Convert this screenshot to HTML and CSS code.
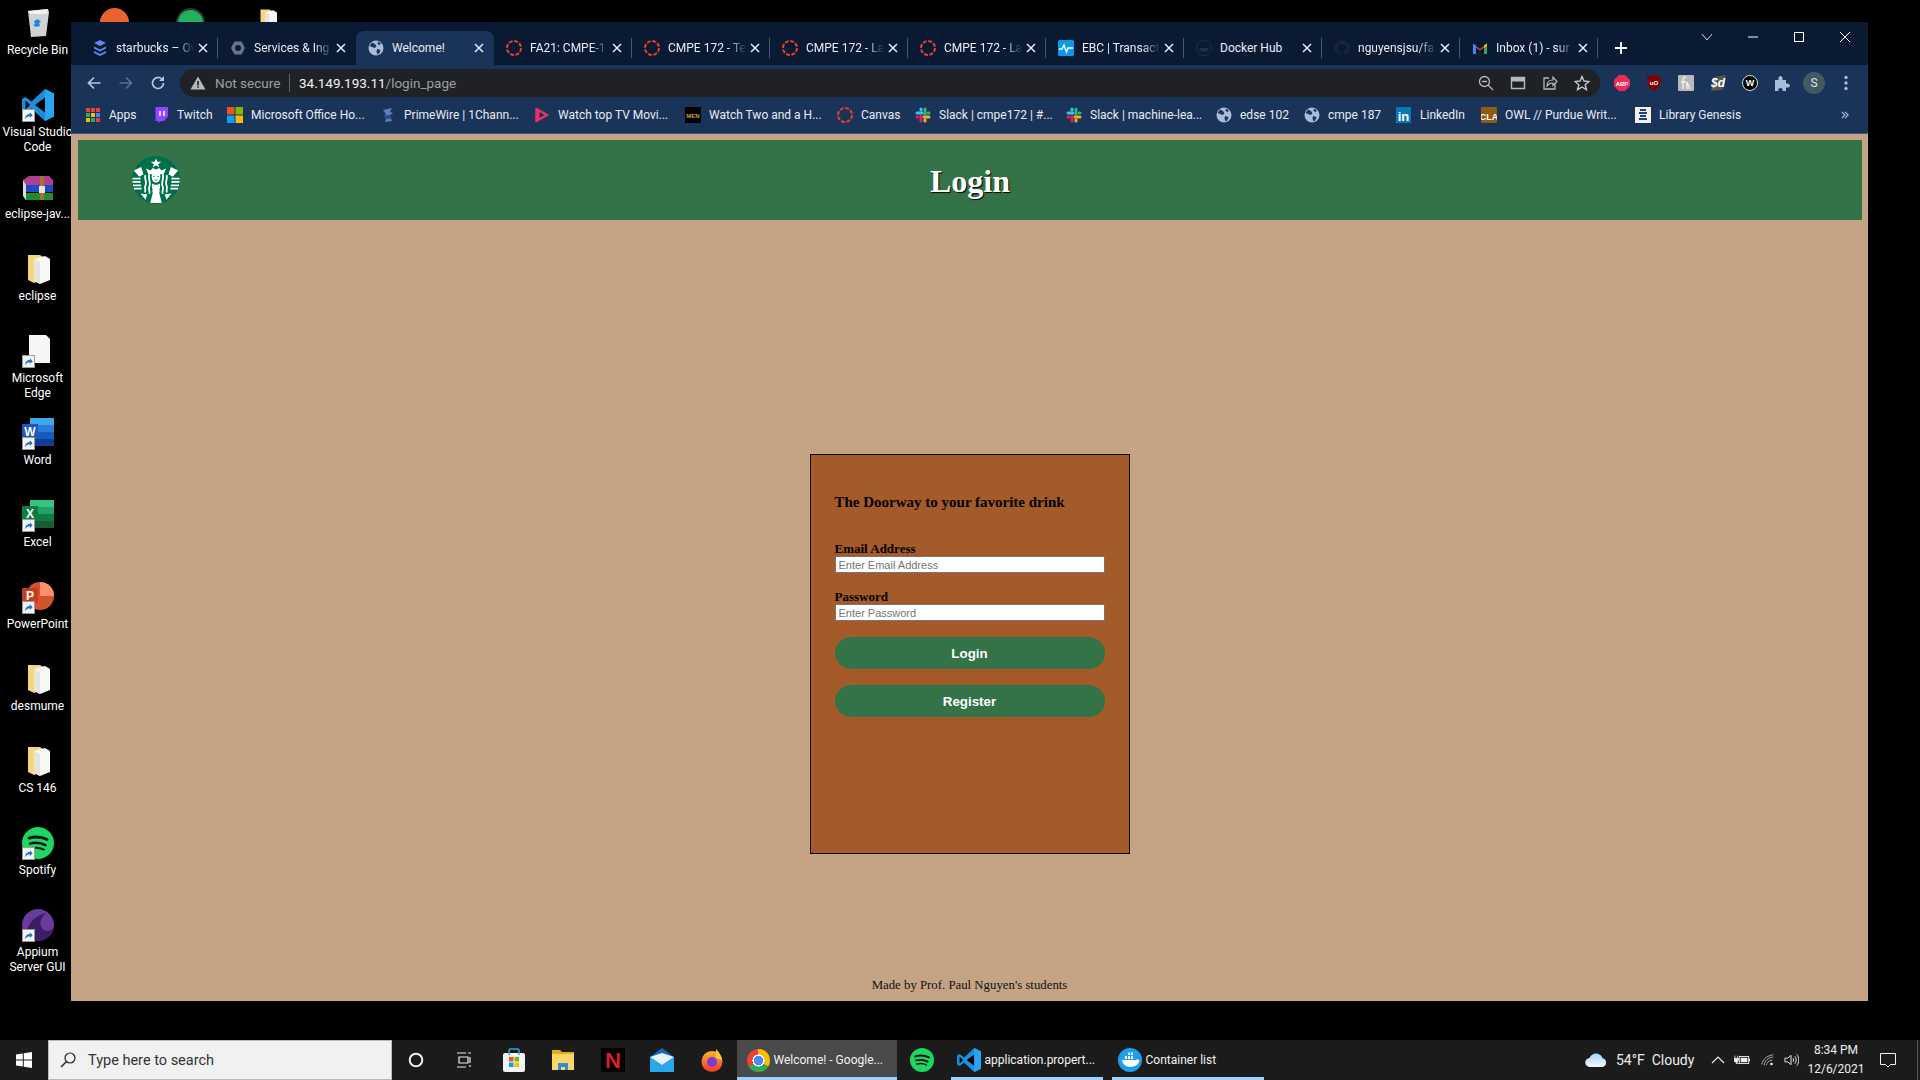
FILE: index.html
```html
<!DOCTYPE html>
<html lang="en">
<head>
<meta charset="utf-8">
<title>Welcome!</title>
<link rel="stylesheet" href="styles.css">
</head>
<body>
<svg class="defs" width="0" height="0" aria-hidden="true">
  <defs>
    <symbol id="canvas" viewBox="0 0 16 16"><circle cx="8" cy="8" r="7" fill="none" stroke="#e8402c" stroke-width="2" stroke-dasharray="3.900 1.600"/></symbol>
    <symbol id="globe" viewBox="0 0 16 16"><circle cx="8" cy="8" r="7.500" fill="#a9bcdc"/><path d="M4 2.500l3 1.500 1.500 2-1.500 2-3-1-2.500-1zM9 9l3.500 1-1 3-2 1.500-1-3zM10 1.500l3 2-1.500 1.500-2-1z" fill="#1a3358"/></symbol>
    <symbol id="slack" viewBox="0 0 16 16"><g stroke-width="3" stroke-linecap="round" fill="none"><path d="M2 6h5" stroke="#36c5f0"/><path d="M6 2v1" stroke="#36c5f0"/><path d="M10 2v5" stroke="#2eb67d"/><path d="M14 6h-1" stroke="#2eb67d"/><path d="M14 10H9" stroke="#ecb22e"/><path d="M10 14v-1" stroke="#ecb22e"/><path d="M6 14V9" stroke="#e01e5a"/><path d="M2 10h1" stroke="#e01e5a"/></g></symbol>
    <symbol id="close" viewBox="0 0 10 10"><path d="M1 1l8 8M9 1l-8 8" stroke="#e8edf5" stroke-width="1.500" fill="none"/></symbol>
    <symbol id="shortcut" viewBox="0 0 14 14"><rect x=".5" y=".5" width="13" height="13" fill="#f4f4f4" stroke="#9a9a9a"/><path d="M3.500 11c0-4 2-5.500 5-5.500V3.500l3 3.200-3 3V7.800c-2 0-3.500.7-5 3.200z" fill="#1f74c9"/></symbol>
    <symbol id="folder" viewBox="0 0 32 32"><path d="M6 2h12l3 2 1 22-10 4-6-3z" fill="#f6d77e"/><path d="M12 6l11-3 5 3v21l-10 4-6-3z" fill="#f7f7f5"/><path d="M12 6l6 3v22l-6-3z" fill="#e4e4e0"/></symbol>
    <symbol id="vscode" viewBox="0 0 32 32"><path d="M23 0l9 4.500v23L23 32 9.500 19.500 3.500 24 0 22V10l3.500-2 6 4.500z" fill="#1a8fe0"/><path d="M23 8.500L13 16l10 7.500z" fill="#000"/><path d="M3.500 11.500v9L8 16z" fill="#000"/><path d="M23 0l9 4.500v23L23 32z" fill="#2aa4ee"/></symbol>
    <symbol id="spotify" viewBox="0 0 30 30"><circle cx="15" cy="15" r="15" fill="#1ed760"/><g fill="none" stroke="#111" stroke-linecap="round"><path d="M6.500 10.500c6-1.800 12-1.300 17 1.300" stroke-width="2.600"/><path d="M7.500 15.500c5-1.300 10-.9 14.500 1.500" stroke-width="2.200"/><path d="M8.500 20c4-1 8.500-.7 12 1.200" stroke-width="1.800"/></g></symbol>
  </defs>
</svg>

<div class="desktop">
  <div class="peek-row">
    <span class="peek peek-orange"></span>
    <span class="peek peek-green"></span>
    <svg class="peek-folder"><use href="#folder"/></svg>
  </div>

  <div class="icons">
    <div class="dicon"><svg class="dimg" viewBox="0 0 32 32"><path d="M6 4l20-2 1 3-3 24-15 1z" fill="#cfd3d6"/><path d="M6 4l20-2-1 5H8z" fill="#f1f1f1"/><path d="M12 14l4-2 3 3-2 1 1 3-4 1-3-2 2-1z" fill="#1c86e0"/></svg><span class="dlabel">Recycle Bin</span></div>
    <div class="dicon"><span class="dbox"><svg class="dimg"><use href="#vscode"/></svg><svg class="arrow"><use href="#shortcut"/></svg></span><span class="dlabel">Visual Studio Code</span></div>
    <div class="dicon"><svg class="dimg" viewBox="0 0 32 32"><path d="M1 9l6-4h20l4 4v5H3z" fill="#b0408f"/><rect x="3" y="14" width="28" height="7" fill="#2148c9"/><rect x="3" y="22" width="28" height="7" fill="#1e8c2f"/><path d="M1 9l3 5v15l-3-4z" fill="#ddd"/><rect x="18" y="5" width="4" height="24" fill="#a8752d"/><rect x="17" y="15" width="6" height="7" fill="#e8e4d8"/></svg><span class="dlabel">eclipse-jav...</span></div>
    <div class="dicon"><svg class="dimg"><use href="#folder"/></svg><span class="dlabel">eclipse</span></div>
    <div class="dicon"><span class="dbox"><svg class="dimg" viewBox="0 0 32 32"><path d="M7 0h17l4 4v24H7z" fill="#f6f6f6"/></svg><svg class="arrow"><use href="#shortcut"/></svg></span><span class="dlabel">Microsoft<br>Edge</span></div>
    <div class="dicon"><span class="dbox"><svg class="dimg" viewBox="0 0 32 32"><rect x="8" y="1" width="24" height="7" fill="#41a5ee"/><rect x="8" y="8" width="24" height="7" fill="#2b7cd3"/><rect x="8" y="15" width="24" height="7" fill="#185abd"/><rect x="8" y="22" width="24" height="7" fill="#103f91"/><rect y="7" width="16" height="15" fill="#1a5bb8"/><text x="8" y="19" class="svg-letter">W</text></svg><svg class="arrow"><use href="#shortcut"/></svg></span><span class="dlabel">Word</span></div>
    <div class="dicon"><span class="dbox"><svg class="dimg" viewBox="0 0 32 32"><rect x="8" y="1" width="24" height="7" fill="#33c481"/><rect x="8" y="8" width="24" height="7" fill="#21a366"/><rect x="8" y="15" width="24" height="7" fill="#107c41"/><rect x="8" y="22" width="24" height="7" fill="#185c37"/><rect y="7" width="16" height="15" fill="#107c41"/><text x="8" y="19" class="svg-letter">X</text></svg><svg class="arrow"><use href="#shortcut"/></svg></span><span class="dlabel">Excel</span></div>
    <div class="dicon"><span class="dbox"><svg class="dimg" viewBox="0 0 32 32"><circle cx="18" cy="15" r="14" fill="#d35230"/><path d="M18 1a14 14 0 0 1 14 14H18z" fill="#ff8f6b"/><rect y="7" width="16" height="15" fill="#c43e1c"/><text x="8" y="19" class="svg-letter">P</text></svg><svg class="arrow"><use href="#shortcut"/></svg></span><span class="dlabel">PowerPoint</span></div>
    <div class="dicon"><svg class="dimg"><use href="#folder"/></svg><span class="dlabel">desmume</span></div>
    <div class="dicon"><svg class="dimg"><use href="#folder"/></svg><span class="dlabel">CS 146</span></div>
    <div class="dicon"><span class="dbox"><svg class="dimg"><use href="#spotify"/></svg><svg class="arrow"><use href="#shortcut"/></svg></span><span class="dlabel">Spotify</span></div>
    <div class="dicon"><span class="dbox"><svg class="dimg" viewBox="0 0 32 32"><circle cx="16" cy="16" r="16" fill="#6a3a9c"/><path d="M4 24C8 10 16 6 24 4c-6 6-8 12-2 17 3 2 7 1 10-3-1 8-8 14-16 14-5 0-9-3-12-8z" fill="#3d1c66"/></svg><svg class="arrow"><use href="#shortcut"/></svg></span><span class="dlabel">Appium<br>Server GUI</span></div>
  </div>

  <div class="window">
    <div class="tabstrip">
      <div class="tab"><svg class="fav" viewBox="0 0 16 16"><path d="M8 0l6 3-6 3-6-3zM2 6.500l6 3 6-3v2l-6 3-6-3zM2 11l6 3 6-3v2l-6 3-6-3z" fill="#5f8bee"/></svg><span class="title">starbucks – Ov</span><svg class="x"><use href="#close"/></svg></div>
      <div class="tab"><svg class="fav" viewBox="0 0 16 16"><path d="M4.500 1.500h7L15 8l-3.500 6.500h-7L1 8z" fill="#6a7485"/><circle cx="8" cy="8" r="3" fill="#0b1a33"/></svg><span class="title">Services &amp; Ing</span><svg class="x"><use href="#close"/></svg></div>
      <div class="tab active"><svg class="fav"><use href="#globe"/></svg><span class="title plain">Welcome!</span><svg class="x"><use href="#close"/></svg></div>
      <div class="tab"><svg class="fav"><use href="#canvas"/></svg><span class="title">FA21: CMPE-1</span><svg class="x"><use href="#close"/></svg></div>
      <div class="tab"><svg class="fav"><use href="#canvas"/></svg><span class="title">CMPE 172 - Te</span><svg class="x"><use href="#close"/></svg></div>
      <div class="tab"><svg class="fav"><use href="#canvas"/></svg><span class="title">CMPE 172 - La</span><svg class="x"><use href="#close"/></svg></div>
      <div class="tab"><svg class="fav"><use href="#canvas"/></svg><span class="title">CMPE 172 - La</span><svg class="x"><use href="#close"/></svg></div>
      <div class="tab"><svg class="fav" viewBox="0 0 16 16"><rect width="16" height="16" rx="1.500" fill="#0a9ae8"/><path d="M1 9h3l2-4 2.500 7L10 8h5" fill="none" stroke="#fff" stroke-width="1.400"/></svg><span class="title">EBC | Transact</span><svg class="x"><use href="#close"/></svg></div>
      <div class="tab"><svg class="fav" viewBox="0 0 16 16"><circle cx="8" cy="8" r="7.500" fill="none" stroke="#1d3248"/><path d="M3 8h8c1 0 2-1 2-1s-.5 5-5 5c-3 0-5-2-5-4z" fill="#1d3248"/></svg><span class="title plain">Docker Hub</span><svg class="x"><use href="#close"/></svg></div>
      <div class="tab"><svg class="fav" viewBox="0 0 16 16"><path d="M8 .5a7.500 7.500 0 0 0-2.400 14.600c.4 0 .5-.2.5-.4v-1.300c-2.100.4-2.600-1-2.600-1-.4-.9-.9-1.100-.9-1.100-.7-.5 0-.5 0-.5.8.1 1.200.8 1.200.8.7 1.200 1.800.9 2.300.7 0-.5.300-.9.500-1.100-1.700-.2-3.400-.8-3.400-3.700 0-.8.300-1.500.8-2-.1-.2-.3-1 .1-2 0 0 .6-.2 2 .8a7 7 0 0 1 3.800 0c1.400-1 2-.8 2-.8.400 1 .2 1.800.1 2 .5.500.8 1.200.8 2 0 2.900-1.700 3.500-3.400 3.700.3.200.500.700.500 1.400v2.100c0 .2.100.4.500.4A7.500 7.500 0 0 0 8 .5z" fill="#1d2633"/></svg><span class="title">nguyensjsu/fa</span><svg class="x"><use href="#close"/></svg></div>
      <div class="tab"><svg class="fav" viewBox="0 0 16 16"><path d="M1 14V4l7 5 7-5v10h-3V7.500L8 10.500 4 7.500V14z" fill="#ea4335"/><path d="M1 14V3.500l3 2V14z" fill="#4285f4"/><path d="M15 14V3.500l-3 2V14z" fill="#34a853"/><path d="M12 5.500l3-2V6l-3 2z" fill="#fbbc04"/></svg><span class="title">Inbox (1) - sur</span><svg class="x"><use href="#close"/></svg></div>
      <div class="newtab"><svg class="plus" viewBox="0 0 14 14"><path d="M7 1v12M1 7h12" stroke="#fff" stroke-width="1.800"/></svg></div>
      <div class="winctl">
        <span class="wbtn"><svg viewBox="0 0 12 12"><path d="M1 3l5 6 5-6" fill="none" stroke="#cfd6e2"/></svg></span>
        <span class="wbtn"><svg viewBox="0 0 12 12"><path d="M1 6h10" stroke="#fff"/></svg></span>
        <span class="wbtn"><svg viewBox="0 0 12 12"><rect x="1.500" y="1.500" width="9" height="9" fill="none" stroke="#fff"/></svg></span>
        <span class="wbtn"><svg viewBox="0 0 12 12"><path d="M1 1l10 10M11 1L1 11" stroke="#fff"/></svg></span>
      </div>
    </div>

    <div class="toolbar">
      <span class="tbtn"><svg viewBox="0 0 16 16"><path d="M14.500 8H2.500M8 2.500L2.500 8 8 13.500" fill="none" stroke="#b9c6dc" stroke-width="1.700"/></svg></span>
      <span class="tbtn"><svg viewBox="0 0 16 16"><path d="M1.500 8h12M8 2.500L13.500 8 8 13.500" fill="none" stroke="#5a6f92" stroke-width="1.700"/></svg></span>
      <span class="tbtn"><svg viewBox="0 0 16 16"><path d="M13.500 8A5.500 5.500 0 1 1 11.800 4" fill="none" stroke="#b9c6dc" stroke-width="1.700"/><path d="M14 1v5H9z" fill="#b9c6dc"/></svg></span>
      <div class="omnibox">
        <svg class="warn" viewBox="0 0 16 16"><path d="M8 1.500L15.500 14.500H.5z" fill="#b5b9be"/><path d="M7.200 6h1.600v4.500H7.200zM7.200 11.300h1.600v1.500H7.200z" fill="#202124"/></svg>
        <span class="secure">Not secure</span>
        <span class="osep"></span>
        <span class="url"><span class="host">34.149.193.11</span>/login_page</span>
        <div class="oicons">
          <span class="tbtn"><svg viewBox="0 0 16 16"><circle cx="6.500" cy="6.500" r="5" fill="none" stroke="#b5b9be" stroke-width="1.300"/><path d="M4 6.500h5M10 10l5 5" stroke="#b5b9be" stroke-width="1.300"/></svg></span>
          <span class="tbtn"><svg viewBox="0 0 16 16"><path d="M1.500 2.500h13v11h-13z" fill="none" stroke="#b5b9be" stroke-width="1.400"/><rect x="1.500" y="2.500" width="13" height="4" fill="#b5b9be"/></svg></span>
          <span class="tbtn"><svg viewBox="0 0 16 16"><path d="M7 3H2v11h11V9" fill="none" stroke="#b5b9be" stroke-width="1.300"/><path d="M5 11c0-4 2.500-6 6-6V2l4 4.500-4 4V8c-3 0-4.500 1-6 3z" fill="none" stroke="#b5b9be" stroke-width="1.200"/></svg></span>
          <span class="tbtn"><svg viewBox="0 0 16 16"><path d="M8 1.500l2 4.500 5 .5-3.800 3.200 1.200 5L8 12l-4.400 2.700 1.200-5L1 6.500 6 6z" fill="none" stroke="#c4c8cd" stroke-width="1.400"/></svg></span>
        </div>
      </div>
      <div class="exts">
        <span class="tbtn"><svg viewBox="0 0 16 16"><path d="M5 0h6l5 5v6l-5 5H5l-5-5V5z" fill="#ee2a56"/><text x="8" y="10.500" class="svg-abp">ABP</text></svg></span>
        <span class="tbtn"><svg viewBox="0 0 16 16"><path d="M8 0l7 2c0 7-1 11-7 14C2 13 1 9 1 2z" fill="#800000"/><text x="8" y="10" class="svg-abp">uO</text></svg></span>
        <span class="tbtn"><svg viewBox="0 0 16 16"><rect width="16" height="16" rx="1" fill="#b9b9b9"/><path d="M5 14V5c0-2 1-3 3-3M3 7h5M9 14V7l3 7" fill="none" stroke="#f2f2f2" stroke-width="1.300"/></svg></span>
        <span class="tbtn"><svg viewBox="0 0 16 16"><path d="M4 2l12-2-3 15-12 1z" fill="#555"/><text x="8" y="12" class="svg-sd">$d</text></svg></span>
        <span class="tbtn"><svg viewBox="0 0 16 16"><circle cx="8" cy="8" r="7.500" fill="#000" stroke="#ddd"/><text x="8" y="11.200" class="svg-w">W</text></svg></span>
        <span class="tbtn"><svg viewBox="0 0 16 16"><path d="M1 5h3.500C4 2 5.500 1 6.500 1S9 2 8.500 5H12v3.500c3-.5 4 1 4 2s-1 2.500-4 2V16H8.500c.5-2-.5-3-2-3s-2.500 1-2 3H1z" fill="#a9bcdc"/></svg></span>
        <span class="tbtn"><span class="avatar">S</span></span>
        <span class="tbtn"><svg viewBox="0 0 16 16"><g fill="#a9bcdc"><circle cx="8" cy="2.500" r="1.700"/><circle cx="8" cy="8" r="1.700"/><circle cx="8" cy="13.500" r="1.700"/></g></svg></span>
      </div>
    </div>

    <div class="bookmarks">
      <div class="bm"><svg class="fav" viewBox="0 0 16 16"><g><rect x="1" y="1" width="4" height="4" fill="#ea4335"/><rect x="6" y="1" width="4" height="4" fill="#ea4335"/><rect x="11" y="1" width="4" height="4" fill="#ea4335"/><rect x="1" y="6" width="4" height="4" fill="#34a853"/><rect x="6" y="6" width="4" height="4" fill="#fbbc04"/><rect x="11" y="6" width="4" height="4" fill="#4285f4"/><rect x="1" y="11" width="4" height="4" fill="#fbbc04"/><rect x="6" y="11" width="4" height="4" fill="#34a853"/><rect x="11" y="11" width="4" height="4" fill="#ea4335"/></g></svg><span>Apps</span></div>
      <div class="bm"><svg class="fav" viewBox="0 0 16 16"><path d="M2.500 0H15v9.500L11 14H8l-2.500 2v-2H2.500z" fill="#9146ff"/><path d="M7 4v5M11 4v5" stroke="#fff" stroke-width="1.500"/></svg><span>Twitch</span></div>
      <div class="bm"><svg class="fav" viewBox="0 0 16 16"><rect width="7.500" height="7.500" fill="#f25022"/><rect x="8.500" width="7.500" height="7.500" fill="#7fba00"/><rect y="8.500" width="7.500" height="7.500" fill="#00a4ef"/><rect x="8.500" y="8.500" width="7.500" height="7.500" fill="#ffb900"/></svg><span>Microsoft Office Ho...</span></div>
      <div class="bm"><svg class="fav" viewBox="0 0 16 16"><path d="M3 3l9-2-2 4 3 1-3 2 2 6-7 1 2-5-3-1 2-2z" fill="#5f7fbf"/><path d="M5 8h6v4H5z" fill="#2a4f8f"/></svg><span>PrimeWire | 1Chann...</span></div>
      <div class="bm"><svg class="fav" viewBox="0 0 16 16"><path d="M2 1.500L14 8 2 14.500z" fill="#e8326c" stroke="#e8326c" stroke-width="1.500" stroke-linejoin="round"/><path d="M5.500 5l5 3-5 3z" fill="#1a3358"/></svg><span>Watch top TV Movi...</span></div>
      <div class="bm"><svg class="fav" viewBox="0 0 16 16"><rect width="16" height="16" fill="#000"/><text x="8" y="10.500" class="svg-men">MEN</text></svg><span>Watch Two and a H...</span></div>
      <div class="bm"><svg class="fav"><use href="#canvas"/></svg><span>Canvas</span></div>
      <div class="bm"><svg class="fav"><use href="#slack"/></svg><span>Slack | cmpe172 | #...</span></div>
      <div class="bm"><svg class="fav"><use href="#slack"/></svg><span>Slack | machine-lea...</span></div>
      <div class="bm"><svg class="fav"><use href="#globe"/></svg><span>edse 102</span></div>
      <div class="bm"><svg class="fav"><use href="#globe"/></svg><span>cmpe 187</span></div>
      <div class="bm"><svg class="fav" viewBox="0 0 16 16"><rect width="15" height="16" fill="#0a78b5"/><text x="7.500" y="13.500" class="svg-in">in</text></svg><span>LinkedIn</span></div>
      <div class="bm"><svg class="fav" viewBox="0 0 16 16"><rect width="16" height="16" rx="1" fill="#8a5d14"/><text x="8" y="13" class="svg-cla">CLA</text></svg><span>OWL // Purdue Writ...</span></div>
      <div class="bm"><svg class="fav" viewBox="0 0 16 16"><rect width="16" height="16" fill="#f3f1e4"/><path d="M5 3h6M4 6h8M5 9h6M4 12h8" stroke="#1c3f86" stroke-width="1.800"/></svg><span>Library Genesis</span></div>
      <div class="bm-more"><svg class="more" viewBox="0 0 10 10"><path d="M1 1l4 4-4 4M5 1l4 4-4 4" fill="none" stroke="#a9bcdc" stroke-width="1.500"/></svg></div>
    </div>

    <div class="page">
      <header class="site-head">
        <div class="logo-cell">
          <svg class="logo" viewBox="0 0 100 100">
            <circle cx="50" cy="50" r="50" fill="#00704a"/>
            <path d="M50 5l3 7h8l-6.500 5 2.500 7-7-4.500-7 4.500 2.500-7L39 12h8z" fill="#fff"/>
            <path d="M29 26l10 4 4-5 7 3 7-3 4 5 10-4-5 12H34z" fill="#fff"/>
            <path d="M4 30l15-7 5 15-9 5zM96 30l-15-7-5 15 9 5z" fill="#fff"/>
            <path d="M1 47h17M1 54h17M2 61h17M4 68h16M82 47h17M82 54h17M81 61h17M80 68h16" stroke="#fff" stroke-width="3.600"/>
            <path d="M28 40c-4 9 5 13 0 22-3 5 2 9-1 14M36 38c-4 11 5 15 0 26-3 6 3 9 0 15M44 58c-3 7 3 10 0 18M56 58c3 7-3 10 0 18M64 38c4 11-5 15 0 26 3 6-3 9 0 15M72 40c4 9-5 13 0 22 3 5-2 9 1 14" fill="none" stroke="#fff" stroke-width="3.800"/>
            <path d="M41 42c0-5 4-8 9-8s9 3 9 8c0 8-3 13-9 13s-9-5-9-13z" fill="#fff"/>
            <path d="M44 43l4-1M52 42l4 1M47 50h6" stroke="#00704a" stroke-width="1.500"/>
            <path d="M46 60h8l2 14 6 24H38l6-24z" fill="#fff"/>
            <path d="M18 78l14 2-4 11zM82 78l-14 2 4 11z" fill="#fff"/>
          </svg>
        </div>
        <h1 class="site-title">Login</h1>
        <div class="head-spacer"></div>
      </header>

      <main class="page-main">
        <form class="card">
          <h2 class="card-title">The Doorway to your favorite drink</h2>
          <label class="field-label" for="email">Email Address</label>
          <input class="field" id="email" type="text" placeholder="Enter Email Address">
          <label class="field-label second" for="password">Password</label>
          <input class="field" id="password" type="password" placeholder="Enter Password">
          <button class="pill-btn" type="button">Login</button>
          <button class="pill-btn" type="button">Register</button>
        </form>
      </main>

      <footer class="site-foot">Made by Prof. Paul Nguyen's students</footer>
    </div>
  </div>
</div>

<div class="taskbar">
  <div class="start"><svg viewBox="0 0 16 16"><path d="M0 2.500L6.800 1.500V7.500H0zM7.800 1.300L16 0V7.500H7.800zM0 8.500H6.800V14.500L0 13.500zM7.800 8.500H16V16L7.800 14.700z" fill="#fff"/></svg></div>
  <div class="search"><svg viewBox="0 0 16 16"><circle cx="10" cy="6" r="5" fill="none" stroke="#222" stroke-width="1.200"/><path d="M6.500 9.500L1 15" stroke="#222" stroke-width="1.400"/></svg><span>Type here to search</span></div>
  <div class="tslot wide"><svg viewBox="0 0 16 16"><circle cx="8" cy="8" r="6.300" fill="none" stroke="#f0f0f0" stroke-width="2"/></svg></div>
  <div class="tslot wide"><svg viewBox="0 0 16 16"><path d="M1 1h9M12 1h3M3 5h9v6H3zM14 5v6M14 13v2M1 15h9" fill="none" stroke="#eee" stroke-width="1.200"/></svg></div>
  <div class="tslot first-app"><svg class="tico" viewBox="0 0 24 24"><rect x="1" y="5" width="22" height="19" rx="2" fill="#f3f3f3"/><path d="M7 7V2.500c0-1 1-1.500 2-1.500h6c1 0 2 .5 2 1.500V7" fill="none" stroke="#29a8e8" stroke-width="1.500"/><rect x="7" y="9" width="4.500" height="4.500" fill="#f25022"/><rect x="12.500" y="9" width="4.500" height="4.500" fill="#7fba00"/><rect x="7" y="14.500" width="4.500" height="4.500" fill="#00a4ef"/><rect x="12.500" y="14.500" width="4.500" height="4.500" fill="#ffb900"/></svg></div>
  <div class="tslot"><svg class="tico" viewBox="0 0 24 24"><path d="M1 2h8l2 2h12v18H1z" fill="#e8a920"/><rect x="1" y="6" width="22" height="16" fill="#fbd766"/><path d="M7 22v-6a1 1 0 0 1 1-1h8a1 1 0 0 1 1 1v6h-3v-3h-4v3z" fill="#2c8fd6"/></svg></div>
  <div class="tslot"><svg class="tico" viewBox="0 0 24 24"><rect width="24" height="24" fill="#000"/><text x="12" y="20" class="svg-netflix">N</text></svg></div>
  <div class="tslot"><svg class="tico" viewBox="0 0 24 24"><path d="M0 9L12 0l12 9v15H0z" fill="#0f6cbd"/><path d="M0 9v15h24V9l-12 8z" fill="#28a8ea"/><path d="M0 9l12 8 12-8-12-4z" fill="#e6f3fb"/></svg></div>
  <div class="tslot"><svg class="tico" viewBox="0 0 24 24"><defs><linearGradient id="ffx" x1="0" y1="0" x2="0" y2="1"><stop offset="0" stop-color="#ffb52e"/><stop offset="1" stop-color="#f0382b"/></linearGradient></defs><circle cx="12" cy="13.500" r="10.500" fill="url(#ffx)"/><path d="M16 1c3 3 6 8 6 11l-6-2z" fill="#ffcc33"/><circle cx="12" cy="14" r="5" fill="#7a3bd0"/></svg></div>
  <div class="tapp active chrome-app"><span class="chrome-icon"></span><span class="tapp-text">Welcome! - Google...</span></div>
  <div class="tslot spot"><svg class="tico"><use href="#spotify"/></svg></div>
  <div class="tapp running vs-app"><svg class="tico"><use href="#vscode"/></svg><span class="tapp-text">application.propert...</span></div>
  <div class="tapp running docker-app"><svg class="tico" viewBox="0 0 24 24"><circle cx="12" cy="12" r="12" fill="#1d9fee"/><path d="M4 12h13c1 0 2-.5 2.500-1 .5 1 1 1 2 1-1 5-5 7-9 7-5 0-8-3-8.500-7z" fill="#fff"/><path d="M7 8h2v3H7zM10 8h2v3h-2zM13 8h2v3h-2zM10 4.500h2V7h-2zM13 4.500h2V7h-2z" fill="#fff"/></svg><span class="tapp-text">Container list</span></div>

  <div class="tray">
    <svg class="cloud" viewBox="0 0 22 14"><defs><linearGradient id="cl" x1="0" y1="0" x2="0" y2="1"><stop offset="0" stop-color="#a5d4f5"/><stop offset="1" stop-color="#f3f9fe"/></linearGradient></defs><path d="M5 14a4.500 4.500 0 0 1-.5-9C6 1.500 9 0 12 .5c3 .5 5 2.500 5.500 4.700A4.500 4.500 0 0 1 17.500 14z" fill="url(#cl)"/></svg>
    <span class="weather">54°F&nbsp; Cloudy</span>
    <svg class="ti chev" viewBox="0 0 14 14"><path d="M1 10l6-6 6 6" fill="none" stroke="#eee" stroke-width="1.200"/></svg>
    <svg class="ti batt" viewBox="0 0 18 14"><path d="M1 2v3M4 2v3M0 5h5v2a2 2 0 0 1-5 0zM2.500 9v2h3" fill="#eee" stroke="#eee" stroke-width=".8"/><rect x="6" y="3" width="10.500" height="8" fill="none" stroke="#eee"/><rect x="7.500" y="4.500" width="7.500" height="5" fill="#eee"/><rect x="16.500" y="5.500" width="1.500" height="3" fill="#eee"/></svg>
    <svg class="ti wifi" viewBox="0 0 16 14"><path d="M1 12C2 6 7 2 14 1M3.500 13C4 8 8 4.500 14 3.500M6 13c.5-3 3-5.500 7-6" fill="none" stroke="#bbb"/><circle cx="12" cy="11.500" r="1.500" fill="#eee"/></svg>
    <svg class="ti vol" viewBox="0 0 16 14"><path d="M1 5h3l3.500-3v10L4 9H1z" fill="none" stroke="#eee"/><path d="M9.500 5c1 1 1 3 0 4M11.500 3c2 2 2 6 0 8M13.500 1c3 3 3 9 0 12" fill="none" stroke="#eee"/></svg>
    <div class="clock"><span>8:34 PM</span><span>12/6/2021</span></div>
    <svg class="notif" viewBox="0 0 16 16"><path d="M.5 1.500h15v11h-5L8 15l-2.500-2.500h-5z" fill="none" stroke="#eee"/></svg>
    <span class="show-desk"></span>
  </div>
</div>
</body>
</html>
```

FILE: styles.css
```css
* { box-sizing: border-box; }
html, body { margin: 0; padding: 0; height: 100%; }
body {
  width: 1920px;
  height: 1080px;
  overflow: hidden;
  background: #000;
  display: flex;
  flex-direction: column;
  font-family: Roboto, "Noto Sans", sans-serif;
}
.defs { position: absolute; }

/* desktop */
.desktop { position: relative; height: 1040px; flex: none; }
.peek-row { position: absolute; left: 100px; top: 8px; display: flex; gap: 47px; }
.peek { width: 29px; height: 29px; border-radius: 50%; display: block; }
.peek-orange { background: #e9622f; }
.peek-green { background: #1fb45c; border: 2px solid #333; }
.peek-folder { width: 24px; height: 24px; margin-left: 4px; }

.icons { width: 75px; padding-top: 7px; display: flex; flex-direction: column; }
.dicon { height: 82px; display: flex; flex-direction: column; align-items: center; }
.dbox { position: relative; width: 32px; height: 32px; display: block; }
.dimg { width: 32px; height: 32px; display: block; flex: none; }
.arrow { position: absolute; left: 0; bottom: -1px; width: 13px; height: 13px; }
.dlabel {
  margin-top: 4px;
  color: #fff;
  font-size: 12px;
  line-height: 15px;
  text-align: center;
}
.svg-letter { font: bold 12px "Liberation Sans", sans-serif; fill: #fff; text-anchor: middle; }
.svg-abp { font: bold 6px "Liberation Sans", sans-serif; fill: #fff; text-anchor: middle; }
.svg-sd { font: italic bold 12px "Liberation Sans", sans-serif; fill: #fff; text-anchor: middle; }
.svg-w { font: bold 9px "Liberation Sans", sans-serif; fill: #fff; text-anchor: middle; }
.svg-men { font: bold 6px "Liberation Sans", sans-serif; fill: #c7a02a; text-anchor: middle; }
.svg-in { font: bold 13px "Liberation Sans", sans-serif; fill: #fff; text-anchor: middle; }
.svg-cla { font: bold 9px "Liberation Sans", sans-serif; fill: #fff; text-anchor: middle; }
.svg-netflix { font: bold 22px "Liberation Sans", sans-serif; fill: #d81f26; text-anchor: middle; }

/* browser window */
.window {
  position: absolute;
  left: 71px;
  top: 22px;
  width: 1797px;
  height: 979px;
  display: flex;
  flex-direction: column;
}
.tabstrip { height: 43px; flex: none; background: #0b1a33; display: flex; padding: 9px 0 0 9px; }
.tab {
  position: relative;
  width: 138px;
  height: 34px;
  flex: none;
  display: flex;
  align-items: center;
  padding-left: 12px;
  color: #e8edf5;
  font-size: 12px;
}
.tab::after {
  content: "";
  position: absolute;
  right: 0;
  top: 7px;
  width: 1px;
  height: 20px;
  background: #46566f;
}
.tab:nth-child(2)::after, .tab.active::after { background: transparent; }
.tab.active { background: #1a3358; border-radius: 8px 8px 0 0; }
.fav { width: 16px; height: 16px; flex: none; display: block; }
.title {
  margin-left: 8px;
  width: 78px;
  flex: none;
  white-space: nowrap;
  -webkit-mask-image: linear-gradient(90deg, #000 78%, transparent 100%);
  mask-image: linear-gradient(90deg, #000 78%, transparent 100%);
}
.title.plain { -webkit-mask-image: none; mask-image: none; }
.x { width: 10px; height: 10px; margin-left: 4px; flex: none; }
.newtab { width: 46px; height: 34px; flex: none; display: flex; align-items: center; justify-content: center; }
.plus { width: 14px; height: 14px; }
.winctl { margin-left: auto; margin-top: -9px; height: 30px; display: flex; }
.wbtn { width: 46px; height: 30px; display: flex; align-items: center; justify-content: center; }
.wbtn svg { width: 12px; height: 12px; }

.toolbar { height: 32px; flex: none; background: #1a3358; display: flex; padding-left: 7px; }
.tbtn { width: 32px; height: 28px; margin-top: 4px; display: flex; align-items: center; justify-content: center; flex: none; }
.tbtn svg { width: 16px; height: 16px; }
.omnibox {
  margin: 4px 0 0 6px;
  width: 1420px;
  height: 28px;
  flex: none;
  border-radius: 14px;
  background: #202124;
  display: flex;
  align-items: center;
  padding-left: 10px;
  color: #9aa0a6;
  font-size: 13.5px;
}
.warn { width: 16px; height: 16px; flex: none; }
.secure { margin-left: 9px; width: 66px; white-space: nowrap; }
.osep { width: 1px; height: 18px; background: #5f6368; margin: 0 9px 0 8px; }
.host { color: #f1f3f4; }
.oicons { margin-left: auto; padding-right: 2px; display: flex; }
.oicons .tbtn { margin-top: 0; }
.exts { margin-left: 6px; display: flex; }
.avatar {
  width: 22px; height: 22px; border-radius: 50%;
  background: #435a63; color: #dfe6ea;
  font-size: 12px; display: flex; align-items: center; justify-content: center;
}

.bookmarks {
  height: 37px;
  flex: none;
  background: #1a3358;
  border-bottom: 1px solid #44546c;
  padding-left: 14px;
  display: grid;
  grid-template-columns: 68px 74px 153px 154px 151px 152px 78px 151px 150px 88px 92px 85px 154px 1fr 46px;
  align-items: center;
  color: #e8edf5;
  font-size: 12px;
}
.bm { display: flex; align-items: center; gap: 8px; white-space: nowrap; height: 20px; }
.bm-more { display: flex; justify-content: center; grid-column: 15; }
.more { width: 8px; height: 8px; }

/* page */
.page { flex: 1; min-height: 0; background: #c4a484; display: flex; flex-direction: column; font-family: "Liberation Serif", serif; }
.site-head {
  height: 80px;
  flex: none;
  margin: 6px 6px 0 7px;
  background: #337347;
  display: grid;
  grid-template-columns: 1fr auto 1fr;
  align-items: center;
}
.logo-cell { padding-left: 54px; display: flex; }
.logo { width: 48px; height: 48px; display: block; }
.site-title { margin: 2px 0 0; color: #fff; font-size: 32px; font-weight: bold; text-shadow: 1px 1px 1px #000; line-height: 40px; }
.page-main { display: flex; justify-content: center; padding-top: 234px; }
.card {
  width: 320px;
  height: 400px;
  background: #a55a2a;
  border: 1px solid #000;
  padding: 38px 24px 0;
  display: flex;
  flex-direction: column;
}
.card-title { margin: 0 0 31px; font-size: 15px; line-height: 18px; font-weight: bold; color: #000; }
.field-label { font-size: 13px; line-height: 14px; font-weight: bold; color: #000; }
.field-label.second { margin-top: 17px; }
.field {
  width: 270px;
  height: 17px;
  padding: 0 3px;
  margin: 0;
  border: 1px solid #767676;
  background: #fff;
  font: 11px "Liberation Sans", Arial, sans-serif;
  color: #000;
  border-radius: 0;
  outline: none;
}
.field::placeholder { color: #757575; opacity: 1; }
.pill-btn {
  width: 270px;
  height: 32px;
  margin-top: 16px;
  flex: none;
  border: 0;
  border-radius: 16px;
  background: #337347;
  color: #fff;
  font: bold 13.333px "Liberation Sans", Arial, sans-serif;
  padding: 0;
}
.site-foot { margin-top: auto; padding-bottom: 9px; text-align: center; font-size: 12.8px; line-height: 14px; color: #111; }

/* taskbar */
.taskbar { height: 40px; flex: none; background: #1b1b1b; display: flex; color: #fff; }
.start { width: 48px; display: flex; align-items: center; justify-content: center; }
.start svg { width: 16px; height: 16px; }
.search {
  width: 344px;
  background: #f1f1f1;
  border: 1px solid #b9b9b9;
  display: flex;
  align-items: center;
  padding-left: 11px;
  color: #333;
  font-size: 14.5px;
}
.search svg { width: 16px; height: 16px; flex: none; }
.search span { margin-left: 12px; white-space: nowrap; }
.tslot { width: 49.500px; display: flex; align-items: center; justify-content: center; flex: none; }
.tslot.wide { width: 48px; }
.tslot.wide svg { width: 16px; height: 16px; }
.tslot.first-app { margin-left: 1px; }
.tico { width: 24px; height: 24px; flex: none; display: block; }
.tapp {
  display: flex;
  align-items: center;
  flex: none;
  font-size: 12px;
  color: #f3f3f3;
  border-top: 3px solid transparent;
  border-bottom: 3px solid transparent;
  white-space: nowrap;
}
.tapp-text { margin-left: 4px; }
.tapp.active { background: #4a4a4a; border-bottom-color: #99d1ff; background-clip: border-box; }
.tapp.running { border-bottom-color: #99d1ff; }
.chrome-app { width: 160px; padding-left: 10px; }
.vs-app { width: 152px; padding-left: 6px; margin-left: 4px; }
.docker-app { width: 152px; padding-left: 6px; margin-left: 9px; }
.spot { width: 50px; }
.chrome-icon {
  width: 23px; height: 23px; border-radius: 50%; flex: none;
  background:
    radial-gradient(circle, #4a8af4 0 4.500px, #fff 4.600px 6px, transparent 6.100px),
    conic-gradient(from 0deg, #fbbc04 0 120deg, #34a853 120deg 240deg, #ea4335 240deg 360deg);
}
.tray { margin-left: auto; display: flex; align-items: center; font-size: 14px; color: #eee; position: relative; height: 40px; }
.cloud { width: 22px; height: 14px; flex: none; }
.weather { margin-left: 9px; width: 78px; white-space: nowrap; }
.ti { height: 14px; flex: none; }
.chev { width: 14px; margin-left: 17px; }
.batt { width: 16px; margin-left: 9px; }
.wifi { width: 14px; margin-left: 11px; }
.vol { width: 15px; margin-left: 9px; }
.clock { width: 60px; margin-left: 7px; display: flex; flex-direction: column; align-items: center; font-size: 12px; line-height: 19px; }
.notif { width: 16px; height: 16px; margin: 0 24px 0 14px; flex: none; }
.show-desk { position: absolute; right: 2px; top: 0; width: 1px; height: 40px; background: #5a5a5a; }
```
